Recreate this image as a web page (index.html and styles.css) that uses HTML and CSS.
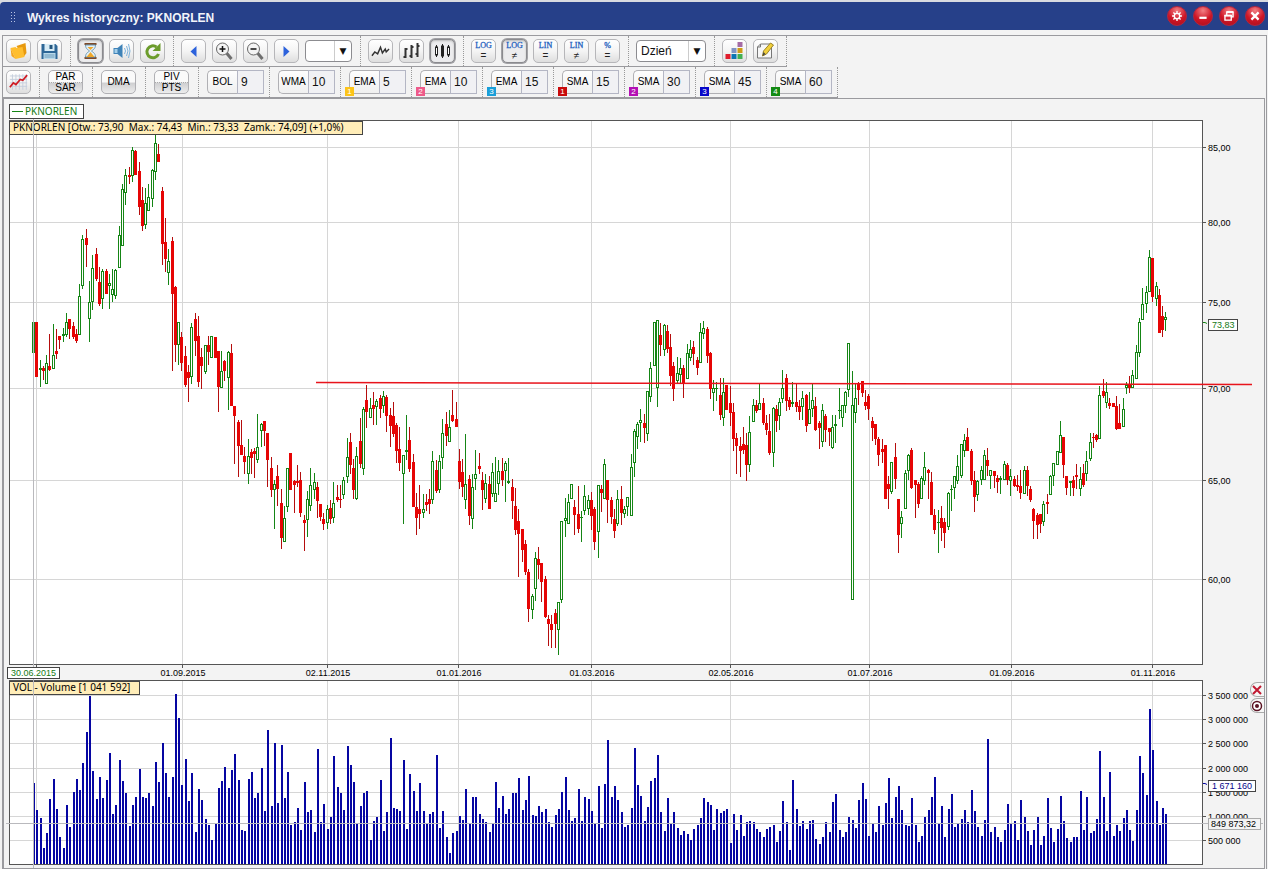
FILE: index.html
```html
<!DOCTYPE html>
<html lang="pl">
<head>
    <meta charset="UTF-8">
    <title>Wykres historyczny: PKNORLEN</title>
    <link rel="stylesheet" href="styles.css">
</head>
<body>
    <header class="titlebar">
        <span class="grip"></span>
        <h1>Wykres historyczny: PKNORLEN</h1>
        <div class="window-buttons">
            <button class="round" aria-label="Ustawienia">
                <svg viewBox="0 0 20 20"><circle cx="10" cy="10" r="3" /><path d="M10 4.500v2.500M10 13v2.500M4.500 10h2.500M13 10h2.500M6 6l2 2M12 12l2 2M14 6l-2 2M8 12l-2 2" /></svg>
            </button>
            <button class="round" aria-label="Minimalizuj">
                <svg viewBox="0 0 20 20"><path d="M6 12h8" stroke-width="2.500" /></svg>
            </button>
            <button class="round" aria-label="Przywróć">
                <svg viewBox="0 0 20 20"><path d="M7.500 9V6h7v5H12" /><path d="M7 5.500h8" stroke-width="2" /><path d="M5.500 9.500h7v5h-7z" /><path d="M5 9.500h8" stroke-width="2" /></svg>
            </button>
            <button class="round" aria-label="Zamknij">
                <svg viewBox="0 0 20 20"><path d="M6 6l8 8M14 6l-8 8" stroke-width="2.500" /></svg>
            </button>
        </div>
    </header>

    <main class="frame">
        <div class="toolbar">
            <div class="group">
                <button class="tool" aria-label="Otwórz">
                    <svg viewBox="0 0 18 18"><path d="M7 4l9-3 1 10-3 4z" fill="#e89a10" /><path d="M1 6l5-1 1 1 6-1 2 10-9 2z" fill="#ffbe2e" /><path d="M1 6l1 8 4 3z" fill="#f5a51c" /></svg>
                </button>
                <button class="tool" aria-label="Zapisz">
                    <svg viewBox="0 0 18 18"><path d="M1 2h14l2 2v13H1z" fill="#2e6797" /><path d="M4 2h10v7H4z" fill="#d8ecf6" /><path d="M9 3h3v4H9z" fill="#24567e" /><path d="M3 11h12v6H3z" fill="#b9d9ea" /><path d="M4 13h10M4 15h10" stroke="#6a9abb" /></svg>
                </button>
            </div>
            <div class="group">
                <button class="tool pressed" aria-label="Czas">
                    <svg viewBox="0 0 18 18"><path d="M3 1h12v2H3zM3 15h12v2H3z" fill="#7c4a2a" /><path d="M4 3h10c0 4-3 5-4 6 1 1 4 2 4 6H4c0-4 3-5 4-6-1-1-4-2-4-6z" fill="#e4f1f8" stroke="#6d9ab4" /><path d="M6 5h6L9 8zM9 10l4 5H5z" fill="#efa72c" /></svg>
                </button>
                <button class="tool" aria-label="Dźwięk">
                    <svg viewBox="0 0 18 18"><path d="M1 6h4l5-4v14l-5-4H1z" fill="#3f83b8" /><path d="M2 7h3v4H2z" fill="#a5cfea" /><path d="M12 6q2 3 0 6M14 4q3 5 0 10M16 2q3 7 0 14" fill="none" stroke="#7eb2da" /></svg>
                </button>
                <button class="tool" aria-label="Odśwież">
                    <svg viewBox="0 0 18 18"><path d="M15 12a6 6 0 1 1-2-7" fill="none" stroke="#6c9c2c" stroke-width="3" /><path d="M17 1v8H9z" fill="#6c9c2c" /></svg>
                </button>
            </div>
            <div class="group">
                <button class="tool" aria-label="Wstecz">
                    <svg viewBox="0 0 18 18"><path d="M12 4v11L6 9.500z" fill="#2c62dc" /></svg>
                </button>
                <button class="tool" aria-label="Powiększ">
                    <svg viewBox="0 0 18 18"><path d="M11 11l5 6" stroke="#6e6e6e" stroke-width="3" /><circle cx="7" cy="7" r="6" fill="#f4f4f4" stroke="#666" /><path d="M4 7h6M7 4v6" stroke="#111" stroke-width="1.500" /></svg>
                </button>
                <button class="tool" aria-label="Pomniejsz">
                    <svg viewBox="0 0 18 18"><path d="M11 11l5 6" stroke="#6e6e6e" stroke-width="3" /><circle cx="7" cy="7" r="6" fill="#f4f4f4" stroke="#666" /><path d="M4 7h6" stroke="#111" stroke-width="1.500" /></svg>
                </button>
                <button class="tool" aria-label="Dalej">
                    <svg viewBox="0 0 18 18"><path d="M6 4v11l6-5.500z" fill="#2c62dc" /></svg>
                </button>
                <span class="combo"><select aria-label="Zakres"><option></option></select></span>
            </div>
            <div class="group">
                <button class="tool" aria-label="Liniowy">
                    <svg viewBox="0 0 20 18"><path d="M1 14l3-4 3 2 3-7 2 6 3-4 1 3 3-3" fill="none" stroke="#333" stroke-width="1.500" /></svg>
                </button>
                <button class="tool" aria-label="Słupkowy">
                    <svg viewBox="0 0 18 18"><path d="M3 6v10M1 15h2M3 7h2M9 3v13M7 14h2M9 5h2M15 1v14M13 12h2M15 4h2" fill="none" stroke="#333" stroke-width="2" /></svg>
                </button>
                <button class="tool pressed" aria-label="Świecowy">
                    <svg viewBox="0 0 18 18"><path d="M3 3v12M9 2v14M15 3v12" stroke="#222" /><rect x="2" y="5" width="2" height="8" fill="#fff" stroke="#222" /><rect x="8" y="4" width="2" height="10" fill="#222" stroke="#222" /><rect x="14" y="5" width="2" height="8" fill="#fff" stroke="#222" /></svg>
                </button>
            </div>
            <div class="group">
                <button class="tool scale"><b>LOG</b><i>=</i></button>
                <button class="tool scale pressed"><b>LOG</b><i>≠</i></button>
                <button class="tool scale"><b>LIN</b><i>=</i></button>
                <button class="tool scale"><b>LIN</b><i>≠</i></button>
                <button class="tool scale"><b>%</b><i>=</i></button>
            </div>
            <div class="group">
                <span class="combo wide"><select aria-label="Interwał"><option>Dzień</option></select></span>
            </div>
            <div class="group">
                <button class="tool" aria-label="Kolory">
                    <svg viewBox="0 0 18 18"><path d="M12 0h5v5h-5z" fill="#a56ca5" /><path d="M6 6h5v5H6z" fill="#8094c4" /><path d="M12 6h5v5h-5z" fill="#cf9a14" /><path d="M0 12h5v5H0z" fill="#e01c2c" /><path d="M6 12h5v5H6z" fill="#0d74b4" /><path d="M12 12h5v5h-5z" fill="#42b052" /></svg>
                </button>
                <button class="tool" aria-label="Notatki">
                    <svg viewBox="0 0 18 18"><path d="M4 2h11v14H1V5z" fill="#f7f7f7" stroke="#777" /><path d="M1 5h3V2" fill="none" stroke="#777" /><path d="M7 9l7-8 3 2-7 9-4 2z" fill="#f1cf3a" stroke="#9b8428" /><path d="M6 14l1-4 2 2z" fill="#444" /></svg>
                </button>
            </div>
        </div>

        <div class="toolbar">
            <div class="group">
                <button class="tool" aria-label="Wskaźniki">
                    <svg viewBox="0 0 22 20"><path d="M1 3h20M1 7h20M1 11h20M1 15h20M4 1v18M8 1v18M12 1v18M16 1v18M20 1v18" stroke="#c3ccdc" /><path d="M1 16l4-5 3 2 5-6 3 1 5-6" fill="none" stroke="#d01c24" stroke-width="2" /></svg>
                </button>
            </div>
            <div class="group text"><button class="name split"><span>PAR</span><span>SAR</span></button></div>
            <div class="group text"><button class="name">DMA</button></div>
            <div class="group text"><button class="name split"><span>PIV</span><span>PTS</span></button></div>
            <div class="group param"><div class="indicator"><label for="bol">BOL</label><input id="bol" value="9"></div></div>
            <div class="group param"><div class="indicator"><label for="wma">WMA</label><input id="wma" value="10"></div></div>
            <div class="group param"><div class="indicator"><label for="ema1">EMA</label><input id="ema1" value="5"><span class="badge yellow">1</span></div></div>
            <div class="group param"><div class="indicator"><label for="ema2">EMA</label><input id="ema2" value="10"><span class="badge pink">2</span></div></div>
            <div class="group param"><div class="indicator"><label for="ema3">EMA</label><input id="ema3" value="15"><span class="badge cyan">3</span></div></div>
            <div class="group param"><div class="indicator"><label for="sma1">SMA</label><input id="sma1" value="15"><span class="badge red">1</span></div></div>
            <div class="group param"><div class="indicator"><label for="sma2">SMA</label><input id="sma2" value="30"><span class="badge magenta">2</span></div></div>
            <div class="group param"><div class="indicator"><label for="sma3">SMA</label><input id="sma3" value="45"><span class="badge blue">3</span></div></div>
            <div class="group param"><div class="indicator"><label for="sma4">SMA</label><input id="sma4" value="60"><span class="badge green">4</span></div></div>
        </div>

        <section class="panel">
            <svg id="chart" class="chart" viewBox="4 99 1260 769">
                <rect class="pane" x="9.500" y="120.500" width="1193" height="544" />
                <rect class="pane" x="9.500" y="680.500" width="1193" height="184" />
                <g id="grid"></g>
                <g id="candles"></g>
                <g id="volume"></g>
                <g id="axis"></g>

                <rect class="tag" x="9.500" y="104.500" width="74" height="14" />
                <path class="up" d="M12 111.500h11" />
                <text class="note green" x="25" y="115">PKNORLEN</text>
                <rect class="tag tip" x="9.500" y="121.500" width="353" height="13" />
                <text class="note" x="13" y="131">PKNORLEN [Otw.: 73,90  Max.: 74,43  Min.: 73,33  Zamk.: 74,09] (+1,0%)</text>
                <rect class="tag tip" x="9.500" y="681.500" width="130" height="13" />
                <text class="note" x="13" y="691">VOL - Volume [1 041 592]</text>

                <path class="cross" d="M33.500 119V868M6 823.500H1263" />
                <path class="trend" d="M316 382.500L1252 384.500" />

                <rect class="tag" x="7.500" y="667.500" width="52" height="11" />
                <text class="label green" x="11" y="676">30.06.2015</text>
                <path class="up" d="M1203 322.500h2l2 1" />
                <rect class="tag" x="1208.500" y="319.500" width="29" height="11" />
                <text class="label green" x="1212" y="328">73,83</text>
                <path class="vol-line" d="M1203 783.500h2l2 1" />
                <rect class="tag" x="1208.500" y="780.500" width="47" height="11" />
                <text class="label navy" x="1212" y="789">1 671 160</text>
                <rect class="tag soft" x="1208.500" y="818.500" width="52" height="11" />
                <text class="label" x="1211" y="827">849 873,32</text>
            </svg>
            <div class="side-buttons">
                <button aria-label="Usuń wykres"><svg viewBox="0 0 12 12"><path d="M2 2l8 8M10 2l-8 8" stroke="#c01830" stroke-width="2" /></svg></button>
                <button aria-label="Ustawienia wykresu"><svg viewBox="0 0 12 12"><circle cx="6" cy="6" r="4.500" fill="#fff" stroke="#5a1424" stroke-width="1.500" /><circle cx="6" cy="6" r="2" fill="#5a1424" /></svg></button>
            </div>
        </section>
    </main>
    <script src="chart.js"></script>
</body>
</html>
```
FILE: styles.css
```css
* {
    box-sizing: border-box;
}

body {
    margin: 0;
    padding-top: 2px;
    background: #d9dbe0;
    font-family: "Liberation Sans", Arial, sans-serif;
    font-size: 12px;
    color: #111;
    overflow: hidden;
}

button,
input,
select {
    font-family: inherit;
    font-size: 12px;
    margin: 0;
    padding: 0;
}

/* title bar */
.titlebar {
    display: flex;
    align-items: center;
    height: 28px;
    padding: 0 3px 0 10px;
    background: #264089;
    border-top-left-radius: 4px;
}

.grip {
    width: 5px;
    height: 11px;
    margin-right: 12px;
    background: radial-gradient(circle, #b9c4e4 40%, transparent 45%) 0 0 / 3px 3px;
}

.titlebar h1 {
    flex: 1;
    margin: 0;
    padding-top: 3px;
    font-size: 12px;
    line-height: 16px;
    color: #f2f4fa;
}

.window-buttons {
    display: flex;
    gap: 6px;
}

.round {
    width: 20px;
    height: 20px;
    border: 1px solid #b3263f;
    border-radius: 50%;
    background: radial-gradient(circle at 50% 20%, #f27f84, #cf1626 55%, #a80e1c);
}

.round svg {
    display: block;
    width: 18px;
    height: 18px;
    fill: none;
    stroke: #fff;
    stroke-width: 1.5;
}

/* toolbars */
.frame {
    padding: 5px 1px 0 2px;
    background: #f3f3f3;
}

.toolbar {
    display: flex;
    width: fit-content;
    height: 31px;
    border-bottom: 1px solid #9a9a9e;
    border-left: 1px solid #9a9a9e;
}

.toolbar:first-child {
    height: 32px;
    border-top: 1px solid #9a9a9e;
}

.group {
    display: flex;
    align-items: center;
    gap: 6px;
    padding: 0 8px 0 7px;
    border-right: 1px dotted #999;
}

.group:first-child {
    padding-left: 3px;
}

.group.text {
    padding: 0 9px 0 8px;
}

.group.param {
    padding: 0 5px 0 8px;
}

.tool {
    display: flex;
    align-items: center;
    justify-content: center;
    width: 25px;
    height: 24px;
    border: 1px solid #b6b6b9;
    border-radius: 5px;
    background: linear-gradient(#fff, #f4f4f4 50%, #dedede);
}

.tool svg {
    width: 19px;
    height: 18px;
}

.tool.pressed {
    border-color: #8a8a8e;
    background: #ececee;
    box-shadow: 0 0 0 1px #a2a2a6, inset 0 1px 2px #bbb;
}

.scale {
    flex-direction: column;
}

.scale b {
    font: 8px/10px "Liberation Serif", serif;
    color: #1f62c0;
    -webkit-text-stroke: 0.3px #1f62c0;
}

.scale i {
    font: 10px/10px "Liberation Sans", sans-serif;
    color: #222;
}

.combo {
    position: relative;
    width: 47px;
    height: 22px;
}

.combo.wide {
    width: 70px;
}

.combo select {
    width: 100%;
    height: 100%;
    padding: 0 4px;
    border: 1px solid #8c8c90;
    border-radius: 4px;
    background: #fff;
    color: #111;
    appearance: none;
}

.combo::after {
    content: "▼";
    position: absolute;
    top: 1px;
    right: 1px;
    bottom: 1px;
    width: 16px;
    border-left: 1px solid #ccc;
    font: 9px/20px "DejaVu Sans", sans-serif;
    text-align: center;
    pointer-events: none;
}

.name {
    width: 35px;
    height: 24px;
    border: 1px solid #b0b0b4;
    border-radius: 5px;
    background: linear-gradient(#fafafa 50%, #cfcfd1 55%, #ededed);
    font-size: 10px;
    line-height: 10px;
    color: #000;
}

.split span {
    display: block;
}

.split span + span {
    border-top: 1px dotted #aaa;
}

.indicator {
    position: relative;
    display: flex;
    width: 57px;
    height: 24px;
}

.indicator label {
    width: 30px;
    border: 1px solid #b0b0b4;
    border-right: 0;
    border-radius: 5px 0 0 5px;
    background: linear-gradient(#fdfdfd, #f0f0f0);
    font-size: 10px;
    line-height: 22px;
    text-align: center;
    color: #000;
}

.indicator input {
    width: 27px;
    padding: 0 3px;
    border: 1px solid #b4b6c4;
    border-radius: 0;
    background: #f1f1f4;
    color: #111;
}

.badge {
    position: absolute;
    left: -4px;
    bottom: -2px;
    width: 9px;
    height: 9px;
    font-size: 8px;
    line-height: 9px;
    text-align: center;
    color: #fff;
}

.yellow { background: #fcc419; }
.pink { background: #ee5a8a; }
.cyan { background: #1a9fd9; }
.red { background: #c90a0a; }
.magenta { background: #b40fb4; }
.blue { background: #0707c9; }
.badge.green { background: #138a13; }

/* chart */
.panel {
    position: relative;
    margin: 0 2px 0 1px;
    border: 1px solid #9a9a9e;
}

.frame::after {
    content: "";
    position: absolute;
    top: 35px;
    right: 1px;
    bottom: 0;
    left: 2px;
    border: 1px solid #9a9a9e;
    border-bottom: 0;
    pointer-events: none;
}

.chart {
    display: block;
    width: 100%;
    height: auto;
}

.pane {
    fill: #fff;
    stroke: #555;
}

.grid-line {
    stroke: #d6d6d6;
}

.cross {
    fill: none;
    stroke: #b9b9bd;
}

.trend {
    stroke: #e8141c;
    stroke-width: 1.5;
}

.up {
    fill: none;
    stroke: #158515;
}

.up-body {
    fill: #fff;
    stroke: #158515;
}

.down {
    stroke: #b50d0d;
}

.down-body {
    fill: #e60505;
}

.bar {
    fill: #0606a2;
}

.tick {
    stroke: #555;
}

.vol-line {
    fill: none;
    stroke: #0606a2;
}

.label {
    font-size: 9px;
    fill: #000;
}

.note {
    font-family: "Noto Sans", sans-serif;
    font-size: 10px;
    fill: #000;
    white-space: pre;
}

.chart .green {
    fill: #147a14;
}

.chart .navy {
    fill: #06068c;
}

.tag {
    fill: #fff;
    stroke: #444;
}

.tip {
    fill: #ffedb8;
}

.soft {
    fill: #f3f3f3;
    stroke: #aaa;
}

.side-buttons {
    position: absolute;
    top: 583px;
    right: 0;
    display: flex;
    flex-direction: column;
    gap: 1px;
}

.side-buttons button {
    width: 14px;
    height: 15px;
    border: 1px solid #aaa;
    border-right: 0;
    border-radius: 7px 0 0 7px;
    background: #f6f6f6;
}

.side-buttons svg {
    display: block;
    width: 12px;
    height: 12px;
}
```
FILE: chart.js
```js
const NS = 'http://www.w3.org/2000/svg';

// first session and distance between sessions
const START = 33.9;
const STEP = 3.302;

// each run: base line, then "direction high top bottom low" in thirds of a unit
const runs = [
    [110, `g 637 637 730 730,r 637 637 802 802,g 750 775 781 830,r 768 774 784 810,g 735 760 823 823,r 672 767 780 782,g 642 736 778 778,r 657 724 731 748,r 679 679 689 716,g 654 673 679 697,
g 609 637 674 682,r 628 628 658 686,r 637 649 680 686,r 657 672 692 700,g 522 559 676 676,g 375 388 529 538,r 357 385 404 470,g 514 577 628 695,g 435 475 577 601,r 414 433 506 514,
r 472 517 581 587,g 477 484 568 598,r 477 484 553 553,g 492 520 528 596,g 477 538 556 577,g 477 479 559 568,g 348 376 475 475,g 222 238 409 409,g 178 196 250 284,r 170 195 201 221,
g 111 121 199 217,r 121 124 196 196,r 157 184 292 314,r 232 271 347 364,g 234 280 346 356,g 222 262 304 304,g 178 181 268 292,g 72 100 187 211,r 102 133 155 155,r 232 244 401 466,
r 324 397 446 485,g 418 454 490 524,r 381 394 553 782,r 528 532 706 755,g 637 637 706 765,r 667 682 758 782,r 709 739 826 832,r 765 787 803 875,g 640 652 802 823,r 610 628 692 737,
r 618 679 817 830,r 715 742 767 838,g 706 706 787 793,r 679 706 727 764,g 679 679 745 745`],
    [300, `r 110 112 173 173,r 154 154 260 335,g 152 214 265 265,r 181 184 212 242,g 154 157 235 329,
r 133 160 317 317,r 319 319 347 491,r 360 367 437 530,r 360 436 464 464,r 440 468 485 523,g 418 469 523 553,r 448 457 473 522,r 444 454 461 533,g 343 442 479 490,g 370 373 394 440,
r 364 364 392 437,r 400 400 479 562,r 472 505 569 590,g 541 553 569 686,r 496 529 568 617,r 567 610 713 746,g 618 655 727 727,g 505 505 622 635,r 460 460 569 569,r 541 543 554 638,
r 495 543 550 562,r 517 541 638 650,r 645 660 668 752,g 573 598 661 710,g 505 556 619 634,g 519 547 569 598,r 547 562 602 654,r 613 613 650 664,r 640 658 671 689,g 615 628 670 686,
r 600 625 656 671,g 547 610 655 668,r 555 592 599 605,r 555 597 601 623,g 532 541 586 596,g 415 472 532 548,r 400 427 494 522,r 477 505 569 596,g 442 469 598 601,r 355 424 491 505,
g 322 328 508 524,r 256 301 335 383,g 295 325 355 355,r 277 316 328 374,g 298 304 322 374,r 285 294 326 355,g 274 289 319 338,r 286 292 347 395,r 324 346 377 440,r 307 349 401 410,
r 370 376 452 488,r 382 448 488 512,g 466 466 523 671,g 346 451 455 479,r 382 421 506 515,r 463 487 622 622,r 580 622 653 704,r 556 628 641 686,g 583 628 640 653,r 582 606 614 634,
r 568 598 613 641,g 454 484 601 611,r 481 511 572 578,g 466 484 569 580,g 358 400 475 506,r 337 373 407 437,g 331 382 427 427,r 270 346 362 365,r 307 358 380 382,r 447 484 545 566,
r 478 517 560 592,g 403 553 601 626,r 526 538 647 674,g 523 562 658 686,g 451 523 538 571,r 460 498 506 523,r 517 541 569 629,g 523 550 598 608,r 529 553 626 626,g 490 517 583 590,
g 472 580 607 607,g 481 514 553 584,r 475 514 541 559,g 484 490 514 605,g 475 544 548 552,r 538 562 602 656,r 565 619 691 704,r 628 664 701 830,r 688 688 751 785,r 721 733 815 824,
r 808 817 926 965,g 883 889 931 956,g 757 775 868 902,r 742 778 794 836,r 790 790 845 905,r 829 838 950 954,r 946 958 971 1037,r 946 973 989 1043,r 928 940 971 1043,g 907 907 991 1064,
g 664 664 901 908,g 595 655 662 710,g 583 607 673 673,g 553 553 598 598,r 600 622 644 704,r 559 643 686 698,g 634 652 655 725,g 556 589 634 644,g 586 601 628 646,r 577 601 647 689,
r 621 628 725 749,g 556 556 697 773,r 556 568 578 635,g 477 493 598 598,r 541 541 599 668,r 592 601 650 671,r 628 656 692 713,g 571 598 673 677,r 559 598 638 674,g 619 628 643 655,
g 592 592 622 647,g 463 502 649 649,g 388 394 490 532,g 367 373 412 446,g 328 361 370 426,r 343 370 383 428,g 274 274 401 422,g 187 205 292 305,g 67 67 199 199,g 61 61 265 320,
r 70 106 134 168,g 72 76 149 167,r 76 94 146 158,r 103 142 227 257,r 187 199 266 302,g 172 220 242 248,g 175 205 226 250,r 195 205 251 293,g 133 160 238 238,g 121 148 175 184,
r 124 142 161 194,r 170 181 203 224,g 70 97 190 190,g 64 85 103 116,r 82 88 167 188,r 155 160 266 296,g 241 265 280 332,g 247 265 267 302,r 235 286 344 359,g 235 277 355 377,
r 256 256 331 331,r 259 310 338 377,r 310 337 416 452,r 400 415 437 521,r 412 439 452 530,r 382 433 449 461,r 400 436 496 542,g 349 397 496 517,g 298 316 367 367`],
    [320, `r 240 256 273 278,
g 193 250 271 271,r 235 250 310 315,r 286 310 329 345,r 283 334 398 406,g 262 265 400 440,r 255 268 302 337,g 235 247 287 329,g 151 205 236 248,r 162 175 242 272,r 232 241 260 269,
g 187 247 251 262,r 193 247 260 276,r 241 259 275 299,g 213 235 262 299,r 222 226 319 335,g 217 268 313 313,g 190 241 268 290,r 230 259 329 332,r 302 310 323 386,g 253 271 367 380,
r 283 289 329 365,r 323 325 335 377,g 285 322 385 388,g 285 313 319 368,g 205 270 272 296,g 256 256 295 320,g 214 217 259 278,g 70 70 211 230,g 153 256 841 841,g 190 235 278 308,
r 187 190 209 256,r 184 184 218 230,r 210 246 257 269,r 222 229 268 299,r 292 304 323 362,r 313 313 358 374,r 352 358 404 437,r 358 388 397 428,r 376 376 536 536,r 469 492 507 566,
g 427 427 517 521,r 370 412 476 506,r 538 538 644 698,g 574 592 613 653,g 451 460 568 568,g 403 406 454 479,r 385 391 503 508,r 480 481 494 593,r 487 493 551 563,g 468 475 538 538,
g 397 442 484 496,r 448 450 459 536,r 457 487 586 586,r 568 586 629 641,g 571 606 608 698,r 559 595 623 662,r 595 607 638 683,g 517 520 622 631,g 496 507 511 572,g 469 469 505 536,
g 406 439 484 491,g 371 371 469 473,g 343 361 394 412`],
    [240, `r 565 592 634 634,r 628 634 722 734,r 694 721 772 815,g 720 722 764 784,g 679 691 721 734,g 631 646 721 721,r 625 661 677 707,
g 691 691 709 746,r 694 694 708 743,r 704 715 727 760,g 709 715 721 763,g 664 673 721 721,r 670 676 721 734,g 688 709 723 769,r 709 717 738 742,r 706 736 740 754,r 691 739 758 776,
g 679 691 763 763,r 679 691 738 767,r 739 748 779 787,r 805 808 842 896,r 820 826 854 896,r 823 823 851 878,g 784 793 847 859,r 763 787 791 821,g 706 709 766 766,g 670 670 709 739,
g 634 634 676 676,g 544 586 640 640,r 592 592 674 715,r 709 709 743 766,g 724 724 728 767,r 709 721 743 769,r 673 706 711 748,g 682 718 748 767,r 673 700 734 740,g 634 664 703 722,
g 580 607 658 664,r 580 592 594 623,r 583 586 599 607,g 439 466 598 598,r 418 454 467 475,g 427 457 490 503,r 475 489 499 506,r 490 490 500 500,r 469 499 566 570,r 493 550 566 566,
g 473 508 562 562,g 427 436 445 461,r 409 431 443 458,g 391 406 445 445,g 316 337 418 418,g 235 247 340 352,g 145 193 241 241,g 139 157 193 220,g 31 52 157 157,r 55 55 170 185,
g 127 139 178 199,r 148 166 280 280,r 199 229 269 290,g 217 232 241 272`]
];

// tops of the volume bars, ten sessions in a row
const volume = [
    385, 465, 490, 580, 535, 433, 373, 462, 546, 580,
    450, 516, 411, 373, 405, 324, 232, 123, 348, 432,
    366, 430, 375, 294, 477, 450, 315, 378, 414, 513,
    450, 426, 342, 426, 430, 414, 453, 321, 381, 264,
    354, 426, 366, 117, 189, 390, 312, 438, 354, 531,
    402, 435, 492, 510, 555, 507, 399, 378, 336, 399,
    345, 297, 375, 525, 528, 372, 351, 430, 414, 339,
    468, 225, 453, 264, 444, 270, 430, 351, 510, 501,
    459, 525, 381, 471, 465, 531, 282, 501, 447, 522,
    486, 303, 396, 414, 465, 273, 330, 381, 507, 453,
    414, 408, 555, 498, 486, 375, 528, 471, 249, 459,
    462, 468, 315, 522, 357, 408, 468, 384, 468, 507,
    477, 471, 300, 519, 468, 546, 594, 534, 528, 483,
    495, 402, 507, 426, 426, 477, 492, 501, 531, 507,
    381, 459, 423, 477, 462, 414, 414, 369, 465, 435,
    363, 480, 483, 453, 471, 462, 501, 516, 480, 462,
    411, 366, 465, 498, 489, 402, 498, 426, 432, 468,
    507, 393, 519, 387, 255, 426, 393, 435, 471, 516,
    510, 459, 279, 390, 423, 498, 456, 378, 369, 300,
    471, 528, 430, 507, 471, 519, 540, 528, 537, 555,
    522, 510, 489, 430, 441, 450, 525, 462, 474, 468,
    462, 564, 477, 525, 480, 543, 501, 498, 501, 522,
    531, 546, 522, 516, 510, 561, 528, 438, 501, 585,
    375, 462, 513, 498, 522, 498, 495, 552, 567, 546,
    501, 531, 441, 417, 525, 546, 531, 486, 495, 519,
    435, 384, 432, 543, 507, 531, 453, 510, 444, 369,
    489, 426, 393, 465, 510, 513, 430, 510, 561, 543,
    486, 465, 426, 366, 507, 453, 546, 462, 417, 516,
    507, 492, 465, 501, 405, 468, 516, 543, 495, 252,
    531, 516, 546, 561, 525, 447, 507, 498, 555, 435,
    486, 528, 570, 525, 486, 570, 543, 429, 519, 561,
    522, 423, 498, 549, 561, 546, 546, 408, 525, 426,
    534, 528, 492, 288, 426, 528, 351, 543, 510, 528,
    489, 465, 525, 558, 465, 303, 354, 420, 162, 285,
    438, 510, 459, 477
];

const dates = [[36, ''], [182, '01.09.2015'], [327, '02.11.2015'], [458, '01.01.2016'], [591, '01.03.2016'],
    [730, '02.05.2016'], [869, '01.07.2016'], [1011, '01.09.2016'], [1152, '01.11.2016']];
const prices = [[147, '85,00'], [222, '80,00'], [302, '75,00'], [388, '70,00'], [480, '65,00'], [579, '60,00']];
const volumes = [[695, '3 500 000'], [719, '3 000 000'], [743, '2 500 000'], [768, '2 000 000'],
    [792, '1 500 000'], [816, '1 000 000'], [840, '500 000']];

function add(parent, tag, attrs, text) {
    const el = document.createElementNS(NS, tag);
    for (const key in attrs) el.setAttribute(key, attrs[key]);
    if (text) el.textContent = text;
    document.getElementById(parent).appendChild(el);
}

function sessionX(i) {
    return Math.round(START + STEP * i);
}

function drawAxes() {
    dates.forEach(([x, text]) => {
        add('grid', 'path', { class: 'grid-line', d: `M${x + 0.5} 121V664M${x + 0.5} 681V864` });
        add('axis', 'path', { class: 'tick', d: `M${x + 0.5} 665v3` });
        if (text) add('axis', 'text', { class: 'label', x: x + 1, y: 676, 'text-anchor': 'middle' }, text);
    });
    prices.concat(volumes).forEach(([y, text]) => {
        add('grid', 'path', { class: 'grid-line', d: `M10 ${y + 0.5}H1202` });
        add('axis', 'path', { class: 'tick', d: `M1203 ${y + 0.5}h3` });
        add('axis', 'text', { class: 'label', x: 1208, y: y + 4 }, text);
    });
}

function drawCandles() {
    let i = 0;
    runs.forEach(([base, data]) => {
        data.split(',').forEach(item => {
            const [dir, ...levels] = item.trim().split(' ');
            const [high, top, bottom, low] = levels.map(v => base + Math.round(v / 3));
            const x = sessionX(i++);
            const up = dir === 'g';
            const height = Math.max(bottom - top, 1);
            add('candles', 'path', { class: up ? 'up' : 'down', d: `M${x - 0.5} ${high}V${low}` });
            if (up) {
                add('candles', 'rect', { class: 'up-body', x: x - 1.5, y: top + 0.5, width: 2, height: height - 1 || 0.01 });
            } else {
                add('candles', 'rect', { class: 'down-body', x: x - 2, y: top, width: 3, height: height });
            }
        });
    });
}

function drawVolume() {
    volume.forEach((v, i) => {
        const top = 655 + Math.round(v / 3);
        add('volume', 'rect', { class: 'bar', x: sessionX(i) - 1, y: top, width: 2, height: 864 - top });
    });
}

drawAxes();
drawCandles();
drawVolume();
```
